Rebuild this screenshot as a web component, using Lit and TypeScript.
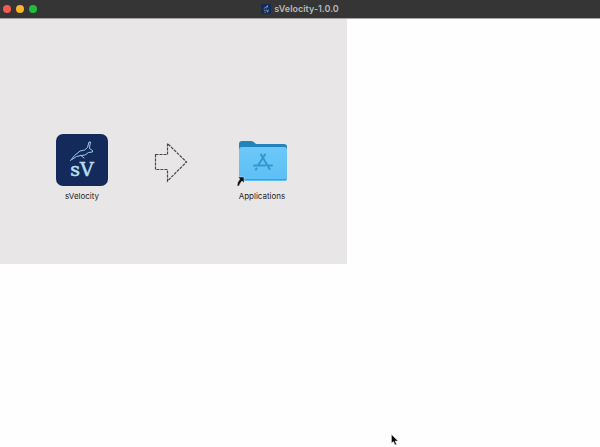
import { LitElement, html, css, svg } from "lit";
import { customElement } from "lit/decorators.js";

const hare = svg`
  <path d="M14.5 26.5 L18.5 21.5 L21 19.5 L24 17 L28.5 16 L31.5 13.5 L33 8 L34.5 8 L33.5 13.5 M33.5 14.5 L36.5 16.5 L36.5 18 L32.5 18.5 L29 21 L25 21.5 L20.5 22.5 L16 25.5 M25 21.5 L28 24"
    fill="none" stroke="#9fcbe8" stroke-width="1" stroke-linejoin="round" stroke-linecap="round"/>`;

@customElement("app-root")
export class AppRoot extends LitElement {
  static styles = css`
    :host {
      display: flex;
      flex-direction: column;
      min-height: 100vh;
      background: #fefefe;
      color: #1f1f1f;
      font-family: Inter, "Liberation Sans", sans-serif;
      position: relative;
      overflow: hidden;
    }
    .titlebar {
      display: grid;
      grid-template-columns: 1fr auto 1fr;
      align-items: center;
      height: 19px;
      box-sizing: border-box;
      background: #353535;
      border-bottom: 1px solid #a5a5a5;
    }
    .lights {
      display: flex;
      gap: 5px;
      padding-left: 3px;
    }
    .light {
      width: 8px;
      height: 8px;
      padding: 0;
      border: 0;
      border-radius: 50%;
    }
    .close { background: #f45b4f; }
    .minimize { background: #fdb62b; }
    .zoom { background: #22bd3c; }
    .title {
      display: flex;
      align-items: center;
      gap: 3px;
      margin: 0;
      font-size: 9px;
      line-height: 12px;
      font-weight: 600;
      color: #b9b9b9;
    }
    .title svg, .art { display: block; }
    .monogram {
      font-family: "DejaVu Serif", serif;
      font-size: 19px;
      fill: #b5dcf3;
      stroke: #b5dcf3;
      stroke-width: 0.6px;
    }
    .content {
      display: flex;
      width: 347px;
      max-width: 100%;
      box-sizing: border-box;
      background: #e8e6e7;
      padding: 115px 37px 62px;
    }
    .item {
      width: 90px;
      display: flex;
      flex-direction: column;
      align-items: center;
      gap: 4px;
      padding: 0;
      border: 0;
      background: none;
      color: inherit;
      font: inherit;
      font-size: 8px;
      line-height: 12px;
    }
    .pointer {
      position: absolute;
      left: 391px;
      bottom: 1px;
    }
  `;

  render() {
    return html`
      <header class="titlebar">
        <div class="lights">
          <button class="light close" aria-label="Close"></button>
          <button class="light minimize" aria-label="Minimize"></button>
          <button class="light zoom" aria-label="Zoom"></button>
        </div>
        <h1 class="title">
          <svg width="10" height="10" viewBox="0 0 52 52" aria-hidden="true">
            <rect width="52" height="52" rx="6" fill="#152a58" />
            <path d="M14 24 L25 17 L34 8 L34 17 L27 22 M16 33 h8 M18 43 h7 M29 29 L34 43 L39 29" fill="none" stroke="#8fb4d2" stroke-width="4" />
          </svg>
          <span>sVelocity-1.0.0</span>
        </h1>
      </header>
      <main class="content">
        <button class="item">
          <svg class="art" width="52" height="52" viewBox="0 0 52 52" aria-hidden="true">
            <rect width="52" height="52" rx="7" fill="#142a5a" />
            ${hare}
            <text class="monogram" x="26" y="42" text-anchor="middle">sV</text>
          </svg>
          <span>sVelocity</span>
        </button>
        <div class="item">
          <svg class="art" width="52" height="52" viewBox="0 0 52 52" aria-hidden="true">
            <path d="M9.5 20.5 H21.5 V9.5 L40.5 28 L21.5 47 V35.5 H9.5 Z" fill="none" stroke="#484848" stroke-width="1.2" stroke-dasharray="3 1" />
          </svg>
        </div>
        <button class="item">
          <svg class="art" width="52" height="52" viewBox="0 0 52 52" aria-hidden="true">
            <defs>
              <linearGradient id="front" x1="0" y1="0" x2="0" y2="1">
                <stop offset="0" stop-color="#6cc8f8" />
                <stop offset="1" stop-color="#5dbff5" />
              </linearGradient>
            </defs>
            <path d="M3 10 Q3 7 6 7 H15 Q17 7 19 9 L20 10 H48 Q51 10 51 13 V44 Q51 47 48 47 H6 Q3 47 3 44 Z" fill="#2384bd" />
            <path d="M3 16 Q3 13 6 13 H48 Q51 13 51 16 V44 Q51 47 48 47 H6 Q3 47 3 44 Z" fill="url(#front)" />
            <path d="M4 45.5 H50" stroke="#429fc9" stroke-width="1" />
            <g fill="none" stroke="#3198d0" stroke-width="2" stroke-linecap="round">
              <path d="M25 20.5 L33.5 35 M29 20.5 L22 31.5 M20.5 34.5 L20 35.5 M18 31.5 H29 M33 31.5 H36" />
            </g>
            <path d="M2 43 H8 V49 L6 47 Q4 49 3 52 H1 Q1 48 4 45 Z" fill="#111" stroke="#e8e6e7" stroke-width="0.5" />
          </svg>
          <span>Applications</span>
        </button>
      </main>
      <svg class="pointer" width="8" height="12" viewBox="0 0 8 12" aria-hidden="true">
        <path d="M0.5 0.5 V9 L2.5 7.5 L4 11 L5.5 10.3 L4 7 H7 Z" fill="#080808" stroke="#d8d8d8" stroke-width="0.5" />
      </svg>
    `;
  }
}
